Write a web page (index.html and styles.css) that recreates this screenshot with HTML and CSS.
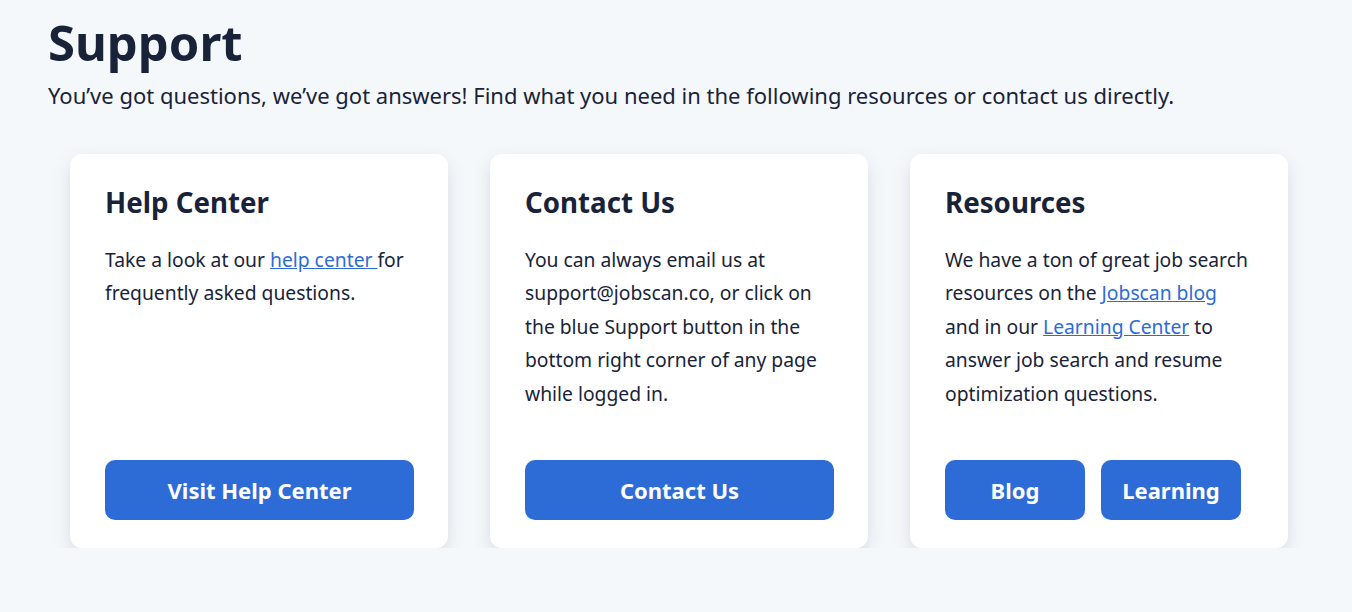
FILE: index.html
```html
<!DOCTYPE html>
<html lang="en">
<head>
<meta charset="utf-8">
<title>Support</title>
<link rel="stylesheet" href="styles.css">
</head>
<body>
<main class="page">
  <h1 class="title">Support</h1>
  <p class="intro">You’ve got questions, we’ve got answers! Find what you need in the following resources or contact us directly.</p>
  <div class="cards">
    <section class="card">
      <h2 class="card-title">Help Center</h2>
      <p class="card-text">Take a look at our <a href="#" class="link">help center </a>for frequently asked questions.</p>
      <div class="actions">
        <a href="#" class="btn btn-full">Visit Help Center</a>
      </div>
    </section>
    <section class="card">
      <h2 class="card-title">Contact Us</h2>
      <p class="card-text">You can always email us at support@jobscan.co, or click on the blue Support button in the bottom right corner of any page while logged in.</p>
      <div class="actions">
        <a href="#" class="btn btn-full">Contact Us</a>
      </div>
    </section>
    <section class="card">
      <h2 class="card-title">Resources</h2>
      <p class="card-text">We have a ton of great job search resources on the <a href="#" class="link">Jobscan blog</a> and in our <a href="#" class="link">Learning Center</a> to answer job search and resume optimization questions.</p>
      <div class="actions">
        <a href="#" class="btn btn-half">Blog</a>
        <a href="#" class="btn btn-half">Learning</a>
      </div>
    </section>
  </div>
</main>
</body>
</html>
```
FILE: styles.css
```css
* { box-sizing: border-box; }
html, body { margin: 0; padding: 0; }
body {
  background: #f5f8fb;
  font-family: "Noto Sans", "Open Sans", sans-serif;
  color: #18233a;
}
.page {
  padding: 12px 48px 0 48px;
}
.title {
  margin: 0;
  font-size: 49px;
  line-height: 60px;
  font-weight: 700;
  color: #18233a;
}
.intro {
  margin: 8px 0 0 0;
  font-size: 22px;
  line-height: 30px;
  color: #18233a;
}
.cards {
  display: flex;
  gap: 42px;
  margin: 44px 0 0 22px;
}
.card {
  width: 378px;
  height: 394px;
  background: #fff;
  border-radius: 12px;
  box-shadow: 0 7px 18px rgba(30, 45, 70, 0.13);
  padding: 28px 34px 28px 35px;
  display: flex;
  flex-direction: column;
}
.card-title {
  margin: 0;
  font-size: 27.7px;
  line-height: 40px;
  font-weight: 700;
}
.card-text {
  margin: 21px 0 0 0;
  font-size: 19.3px;
  line-height: 33.4px;
  color: #18233a;
}
.link {
  color: #2b6bd8;
  text-decoration: underline;
}
.actions {
  margin-top: auto;
  display: flex;
  gap: 16px;
}
.btn {
  display: flex;
  align-items: center;
  justify-content: center;
  height: 60px;
  border-radius: 10px;
  background: #2d6bd6;
  color: #fff;
  font-size: 22px;
  font-weight: 700;
  text-decoration: none;
}
.btn-full { width: 310px; }
.btn-half { width: 140px; }
```
